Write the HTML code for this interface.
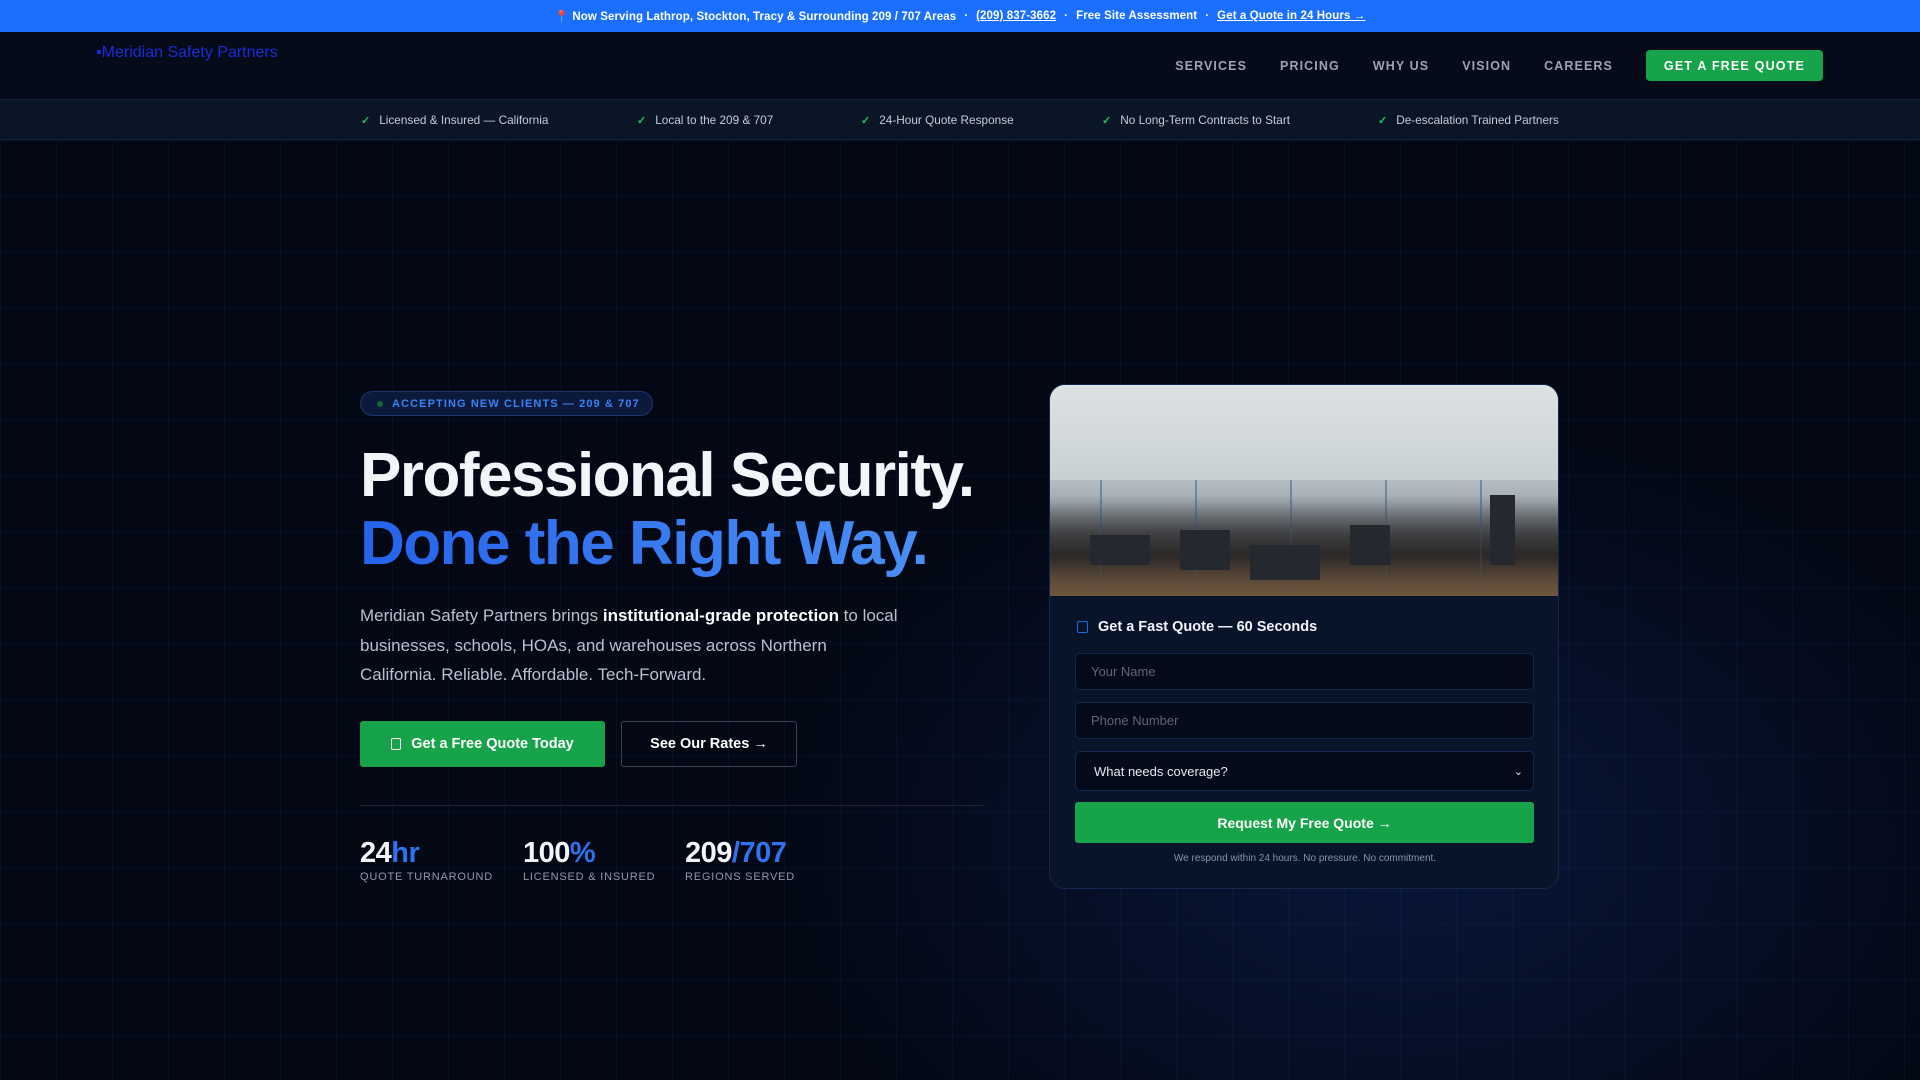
<!DOCTYPE html>
<html><head><meta charset="utf-8">
<style>
*{box-sizing:border-box;margin:0;padding:0}
body{width:1920px;height:1080px;overflow:hidden;background:#030814;font-family:"Liberation Sans",sans-serif;color:#e5e9f0}
.top{height:32px;background:#1a6fff;color:#fff;font-size:11.5px;font-weight:bold;display:flex;align-items:center;justify-content:center;gap:8px;letter-spacing:.1px}
.top a{color:#fff;text-decoration:underline}
.nav{height:67px;background:#050b18;position:relative}
.logo{position:absolute;left:96px;top:12px;color:#1d2bd8;font-size:16px}
.links{position:absolute;right:97px;top:18px;display:flex;align-items:center}
.links span{color:#9aa4b5;font-size:12.5px;font-weight:bold;letter-spacing:1.1px;margin-right:33px}
.cta{background:#16a34a;color:#fff;font-size:12.5px;font-weight:bold;letter-spacing:1.2px;width:177px;height:31px;border-radius:4px;display:flex;align-items:center;justify-content:center}
.trust{height:41px;background:#0a1526;border-top:1px solid #13203a;border-bottom:1px solid #13203a;position:relative;font-size:11.8px;color:#c5ccd8}
.trust div{position:absolute;top:13px}
.trust b{color:#22c55e;margin-right:9px;font-weight:bold;font-size:11px}
.hero{position:absolute;top:140px;left:0;width:1920px;height:940px;
background:
linear-gradient(rgba(30,60,140,.13) 1px,transparent 1px) 0 0/56px 56px,
linear-gradient(90deg,rgba(30,60,140,.13) 1px,transparent 1px) 0 0/56px 56px,
radial-gradient(ellipse 900px 600px at 1400px 700px,rgba(20,50,130,.35),transparent 70%),
#030814}
.badge{position:absolute;left:360px;top:251px;width:293px;height:25px;border:1px solid #1b3570;background:#0b1a3a;border-radius:13px;color:#3b82f6;font-size:11px;font-weight:bold;letter-spacing:1.1px;display:flex;align-items:center;padding-left:31px}
.badge:before{content:"";position:absolute;left:16px;top:9px;width:6px;height:6px;border-radius:50%;background:#166534}
h1{position:absolute;left:360px;top:302px;font-size:62px;line-height:68px;letter-spacing:-1.5px;font-weight:bold;color:#f3f5f9;white-space:nowrap}
h1 .b{background:linear-gradient(90deg,#2563eb,#4a8ff5);-webkit-background-clip:text;color:transparent}
.p{position:absolute;left:360px;top:461px;width:540px;font-size:17px;line-height:29.5px;color:#b8c0cd}
.p b{color:#fff}
.b1{position:absolute;left:360px;top:581px;width:245px;height:46px;background:#16a34a;border-radius:3px;color:#fff;font-weight:bold;font-size:14.5px;display:flex;align-items:center;justify-content:center;gap:10px}
.b1 i{width:10px;height:12px;border:1.6px solid #fff;border-radius:2px;display:inline-block}
.b2{position:absolute;left:621px;top:581px;width:176px;height:46px;border:1px solid #3a4252;border-radius:3px;color:#fff;font-weight:bold;font-size:14.5px;display:flex;align-items:center;justify-content:center}
.hr{position:absolute;left:360px;top:665px;width:625px;height:1px;background:#1a2436}
.st{position:absolute;top:697px}
.st .n{font-size:29px;font-weight:bold;color:#f3f5f9;letter-spacing:-.5px}
.st .n span{color:#2f72f0}
.st .l{font-size:11px;color:#8f99aa;letter-spacing:.8px;margin-top:1px}
.card{position:absolute;left:1049px;top:244px;width:510px;height:505px;border:1px solid #13264d;border-radius:16px;background:#071429;overflow:hidden}
.img{height:211px;position:relative;background:
linear-gradient(180deg,rgba(0,0,0,0) 55%,rgba(40,30,25,.5) 80%,rgba(110,85,60,.85) 100%),
repeating-linear-gradient(90deg,transparent 0 50px,rgba(60,100,140,.55) 50px 52px,transparent 52px 95px),
linear-gradient(180deg,#d8dde0 0%,#c6cdd1 35%,#a8b2b8 52%,#4d5258 70%,#2c2e33 82%,#7a6550 100%)}
.img:before{content:"";position:absolute;left:0;right:0;top:0;height:95px;background:linear-gradient(180deg,#dde2e4,#c9d0d4)}
.img i{position:absolute;background:#25282e}
.ft{position:absolute;left:27px;top:234px;font-size:14.5px;font-weight:bold;color:#f3f5f9;display:flex;align-items:center;gap:10px}
.ft i{width:11px;height:12px;border:1.6px solid #2563eb;border-radius:2px}
.in{position:absolute;left:25px;width:459px;border:1px solid #13264d;border-radius:5px;background:#040a19;color:#5b6679;font-size:13px;padding-left:15px;display:flex;align-items:center}
.sub{position:absolute;left:25px;top:417px;width:459px;height:41px;background:#16a34a;border-radius:3px;color:#fff;font-weight:bold;font-size:14px;display:flex;align-items:center;justify-content:center}
.note{position:absolute;left:0;width:510px;top:468px;text-align:center;font-size:10px;color:#8a94a6}
</style></head><body>
<div class="top"><span>📍 Now Serving Lathrop, Stockton, Tracy &amp; Surrounding 209 / 707 Areas</span><span>·</span><a>(209) 837-3662</a><span>·</span><span>Free Site Assessment</span><span>·</span><a>Get a Quote in 24 Hours →</a></div>
<div class="nav"><div class="logo">▪Meridian Safety Partners</div>
<div class="links"><span>SERVICES</span><span>PRICING</span><span>WHY US</span><span>VISION</span><span>CAREERS</span><div class="cta">GET A FREE QUOTE</div></div></div>
<div class="trust">
<div style="left:361px"><b>✓</b>Licensed &amp; Insured — California</div>
<div style="left:637px"><b>✓</b>Local to the 209 &amp; 707</div>
<div style="left:861px"><b>✓</b>24-Hour Quote Response</div>
<div style="left:1102px"><b>✓</b>No Long-Term Contracts to Start</div>
<div style="left:1378px"><b>✓</b>De-escalation Trained Partners</div>
</div>
<div class="hero">
<div class="badge">ACCEPTING NEW CLIENTS — 209 &amp; 707</div>
<h1>Professional Security.<br><span class="b">Done the Right Way.</span></h1>
<div class="p">Meridian Safety Partners brings <b>institutional-grade protection</b> to local businesses, schools, HOAs, and warehouses across Northern California. Reliable. Affordable. Tech-Forward.</div>
<div class="b1"><i></i>Get a Free Quote Today</div>
<div class="b2">See Our Rates →</div>
<div class="hr"></div>
<div class="st" style="left:360px"><div class="n">24<span>hr</span></div><div class="l">QUOTE TURNAROUND</div></div>
<div class="st" style="left:523px"><div class="n">100<span>%</span></div><div class="l">LICENSED &amp; INSURED</div></div>
<div class="st" style="left:685px"><div class="n">209<span>/707</span></div><div class="l">REGIONS SERVED</div></div>
<div class="card">
<div class="img"><i style="left:40px;top:150px;width:60px;height:30px"></i><i style="left:130px;top:145px;width:50px;height:40px"></i><i style="left:200px;top:160px;width:70px;height:35px"></i><i style="left:300px;top:140px;width:40px;height:40px"></i><i style="left:440px;top:110px;width:25px;height:70px"></i></div>
<div class="ft"><i></i>Get a Fast Quote — 60 Seconds</div>
<div class="in" style="top:268px;height:37px">Your Name</div>
<div class="in" style="top:317px;height:37px">Phone Number</div>
<div class="in" style="top:366px;height:40px;color:#e5e9f0;padding-left:18px;justify-content:space-between;padding-right:10px">What needs coverage?<span style="font-size:11px">⌄</span></div>
<div class="sub">Request My Free Quote →</div>
<div class="note">We respond within 24 hours. No pressure. No commitment.</div>
</div>
</div>
</body></html>
